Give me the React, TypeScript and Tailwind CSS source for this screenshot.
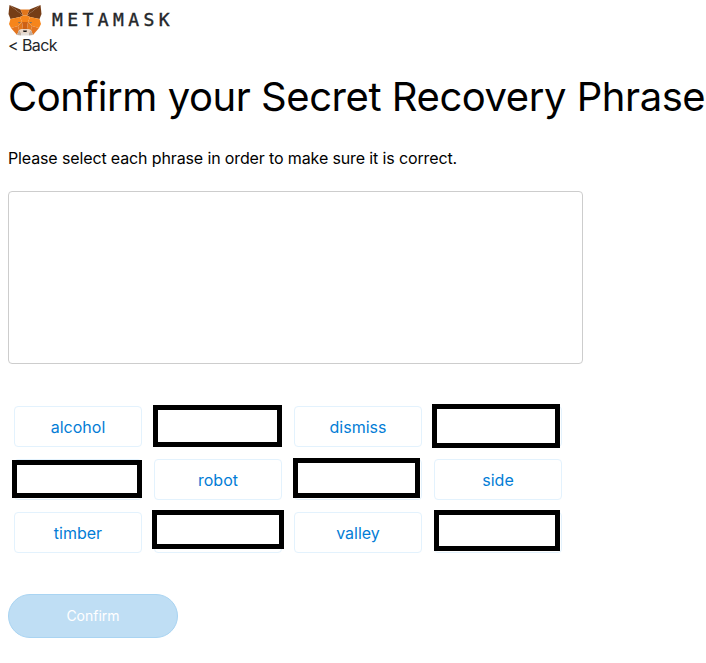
import React from 'react';

type Redaction = 'none' | 'a' | 'b' | 'c' | 'd' | 'e' | 'f';

const WORDS: { label: string; redact: Redaction }[] = [
  { label: 'alcohol', redact: 'none' },
  { label: '', redact: 'a' },
  { label: 'dismiss', redact: 'none' },
  { label: '', redact: 'b' },
  { label: '', redact: 'c' },
  { label: 'robot', redact: 'none' },
  { label: '', redact: 'd' },
  { label: 'side', redact: 'none' },
  { label: 'timber', redact: 'none' },
  { label: '', redact: 'e' },
  { label: 'valley', redact: 'none' },
  { label: '', redact: 'f' },
];

// black boxes painted over some of the words
const REDACT_CLASS: Record<Redaction, string> = {
  none: 'hidden',
  a: 'absolute -left-[2px] -top-[2px] w-[129px] h-[42px] border-[5px] border-black bg-white',
  b: 'absolute -left-[3px] -top-[3px] w-[128px] h-[44px] border-[5px] border-black bg-white',
  c: 'absolute -left-[3px] top-0 w-[130px] h-[38px] border-[5px] border-black bg-white',
  d: 'absolute -left-[2px] -top-[2px] w-[127px] h-[40px] border-[5px] border-black bg-white',
  e: 'absolute -left-[3px] -top-[3px] w-[132px] h-[39px] border-[5px] border-black bg-white',
  f: 'absolute -left-px -top-[3px] w-[126px] h-[41px] border-[5px] border-black bg-white',
};

const FoxLogo = () => (
  <svg width="34" height="31" viewBox="0 0 34 31" className="shrink-0">
    {/* ears */}
    <polygon points="32.5,0 19,10.5 21.5,4.5" fill="#763d16" />
    <polygon points="1.5,0 15,10.5 12.5,4.5" fill="#763d16" />
    <polygon points="32.5,0 33.5,9 31.5,14 22,12 19,10.5" fill="#763d16" />
    <polygon points="1.5,0 0.5,9 2.5,14 12,12 15,10.5" fill="#763d16" />
    {/* forehead */}
    <polygon points="12.5,4.5 21.5,4.5 19,10.5 15,10.5" fill="#e2761b" />
    <polygon points="15,10.5 19,10.5 22,12 20,17 14,17 12,12" fill="#f6851b" />
    {/* cheeks */}
    <polygon points="2.5,14 12,12 14,17 10,21 3,23 1,19" fill="#f6851b" />
    <polygon points="31.5,14 22,12 20,17 24,21 31,23 33,19" fill="#f6851b" />
    <polygon points="3,23 10,21 11,25 9,30" fill="#e4751f" />
    <polygon points="31,23 24,21 23,25 25,30" fill="#e4751f" />
    <polygon points="10,21 14,17 15,24 11,25" fill="#e2761b" />
    <polygon points="24,21 20,17 19,24 23,25" fill="#e2761b" />
    {/* eyes */}
    <polygon points="10,17 13,17.3 11,18.6" fill="#6a6f6e" />
    <polygon points="24,17 21,17.3 23,18.6" fill="#6a6f6e" />
    {/* muzzle */}
    <polygon points="14,17 20,17 19,24 15,24" fill="#cd6116" />
    <polygon points="11,25 15,24 19,24 23,25 21,28 13,28" fill="#e8d5c6" />
    <polygon points="9,30 11,25 13,28 13,30.5" fill="#c0ad9e" />
    <polygon points="25,30 23,25 21,28 21,30.5" fill="#c0ad9e" />
    <polygon points="13,28 21,28 21,30.5 13,30.5" fill="#e4ddd6" />
    <polygon points="15,25.5 19,25.5 18.5,27 15.5,27" fill="#161616" />
  </svg>
);

export default function App() {
  return (
    <div className="min-h-screen bg-white pl-2 font-['Inter','Liberation_Sans',sans-serif] text-black overflow-hidden">
      <div className="flex items-center pt-[5px] h-[35px]">
        <FoxLogo />
        <span className="ml-[10px] font-['DejaVu_Sans_Mono',monospace] text-[18px] leading-none tracking-[4.4px] text-[#24272a] [-webkit-text-stroke:0.4px_#24272a]">
          METAMASK
        </span>
      </div>

      <div className="text-base leading-[22px] tracking-[-0.6px] text-[#24272a] -mt-px">&lt; Back</div>

      <h1 className="text-[40px] leading-[50px] font-normal tracking-[-0.45px] whitespace-nowrap mt-[16px]">
        Confirm your Secret Recovery Phrase
      </h1>

      <p className="text-base leading-[22px] tracking-[-0.13px] mt-[25px]">
        Please select each phrase in order to make sure it is correct.
      </p>

      <div className="w-[575px] h-[173px] mt-[22px] border border-[#cdcdcd] rounded"></div>

      <div className="grid grid-cols-[repeat(4,128px)] gap-x-3 gap-y-3 ml-[6px] mt-[42px]">
        {WORDS.map((w, i) => (
          <div
            key={i}
            className="relative h-[41px] flex items-center justify-center border border-[#e3f2fd] rounded text-[#037dd6] text-base"
          >
            {w.label}
            <div className={REDACT_CLASS[w.redact]}></div>
          </div>
        ))}
      </div>

      <button className="block w-[170px] h-[44px] mt-[41px] rounded-full border border-[#a9d4f2] bg-[#bfdef4] text-white text-sm">
        Confirm
      </button>
    </div>
  );
}
